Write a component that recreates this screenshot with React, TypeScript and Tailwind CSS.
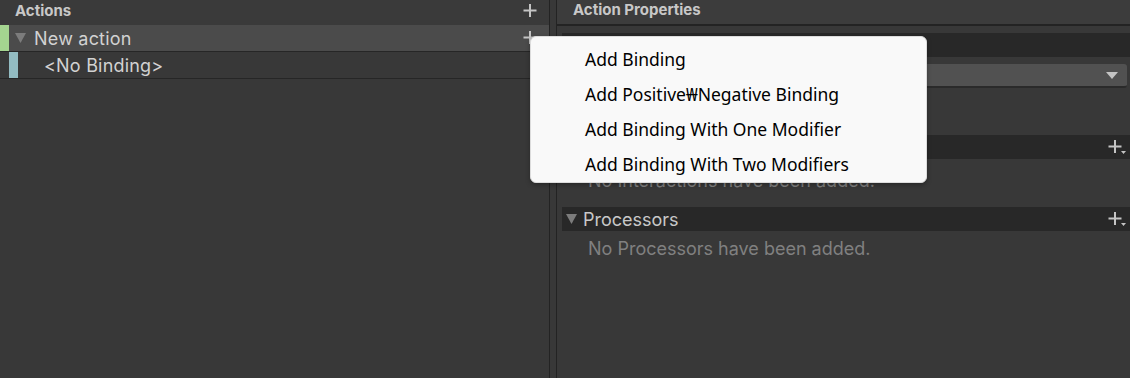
import React from "react";

const ui = { fontFamily: "Inter, 'Noto Sans', sans-serif" };
const menuFont = { fontFamily: "'Noto Sans', 'Open Sans', sans-serif" };

function Plus({ caret = false }: { caret?: boolean }) {
  return (
    <svg width="20" height="18" viewBox="0 0 20 18" className="shrink-0">
      <path d="M8 2v13M1.5 8.5h13" stroke="#c4c4c4" strokeWidth="2" />
      {caret && <path d="M14 13h5l-2.5 3z" fill="#c4c4c4" />}
    </svg>
  );
}

function Triangle() {
  return (
    <svg width="11" height="10" viewBox="0 0 11 10" className="shrink-0">
      <path d="M0 0h11L5.5 10z" fill="#7c7c7c" />
    </svg>
  );
}

function FoldHeader({ title, caret }: { title?: string; caret?: boolean }) {
  return (
    <div className="flex h-[24px] items-center bg-[#282828] pl-[4px] pr-[3px]">
      {title && (
        <>
          <Triangle />
          <span className="ml-[6px] text-[18px] text-[#c8c8c8]">{title}</span>
        </>
      )}
      <div className="flex-1" />
      {caret && <Plus caret />}
    </div>
  );
}

export default function App() {
  const items = [
    "Add Binding",
    "Add Positive\u20A9Negative Binding",
    "Add Binding With One Modifier",
    "Add Binding With Two Modifiers",
  ];
  return (
    <div className="relative flex h-[378px] w-[1130px] overflow-hidden bg-[#383838]" style={ui}>
      {/* Actions */}
      <div className="flex w-[549px] flex-col">
        <div className="flex h-[25px] items-center bg-[#3a3a3a] pr-[7px] pb-[3px] pl-[15px]">
          <span className="text-[15px] font-bold text-[#c8c8c8]">Actions</span>
          <div className="flex-1" />
          <Plus />
        </div>
        <div className="flex h-[27px] border-b border-[#262626] bg-[#4b4b4b]">
          <div className="w-[9px] bg-[#a4d490]" />
          <div className="flex flex-1 items-center pr-[7px] pl-[6px]">
            <Triangle />
            <span className="ml-[8px] text-[18px] tracking-[0.2px] text-[#d2d2d2]">New action</span>
            <div className="flex-1" />
            <Plus />
          </div>
        </div>
        <div className="flex h-[27px] border-b border-[#262626]">
          <div className="ml-[9px] w-[9px] bg-[#93bcc2]" />
          <span className="ml-[26px] self-center text-[18px] tracking-[0.2px] text-[#d2d2d2]">&lt;No Binding&gt;</span>
        </div>
      </div>

      {/* divider */}
      <div className="w-[1px] bg-[#232323]" />
      <div className="w-[6px]" />
      <div className="w-[1px] bg-[#232323]" />

      {/* Action Properties */}
      <div className="flex flex-1 flex-col">
        <div className="flex h-[26px] items-center border-b-2 border-[#232323] bg-[#3c3c3c] pb-[3px] pl-[16px]">
          <span className="text-[15px] font-bold text-[#c8c8c8]">Action Properties</span>
        </div>
        <div className="flex flex-col pl-[5px]">
          <div className="mt-[7px]">
            <FoldHeader title="Action" />
          </div>
          <div className="mt-[7px] mr-[3px] ml-[180px] flex h-[24px] items-center justify-end rounded-[3px] border-b-2 border-[#2a2a2a] bg-[#515151] pr-[9px]">
            <svg width="12" height="7" viewBox="0 0 12 7">
              <path d="M0 0h12L6 7z" fill="#c4c4c4" />
            </svg>
          </div>
          <div className="mt-[47px]">
            <FoldHeader title="Interactions" caret />
          </div>
          <div className="mt-[8px] pl-[26px] text-[18px] text-[#808080]">No Interactions have been added.</div>
          <div className="mt-[13px]">
            <FoldHeader title="Processors" caret />
          </div>
          <div className="mt-[4px] pl-[26px] text-[18px] text-[#808080]">No Processors have been added.</div>
        </div>
      </div>

      {/* context menu */}
      <div
        className="absolute top-[36px] left-[530px] w-[397px] rounded-[6px] border border-[#dcdcdc] bg-[#f9f9f9] pt-[5px] pb-[0px] shadow-[0_2px_5px_rgba(0,0,0,0.3)]"
        style={menuFont}
      >
        {items.map((t) => (
          <div key={t} className="flex h-[35px] items-center pl-[54px] text-[17.5px] text-black">
            {t}
          </div>
        ))}
      </div>
    </div>
  );
}
